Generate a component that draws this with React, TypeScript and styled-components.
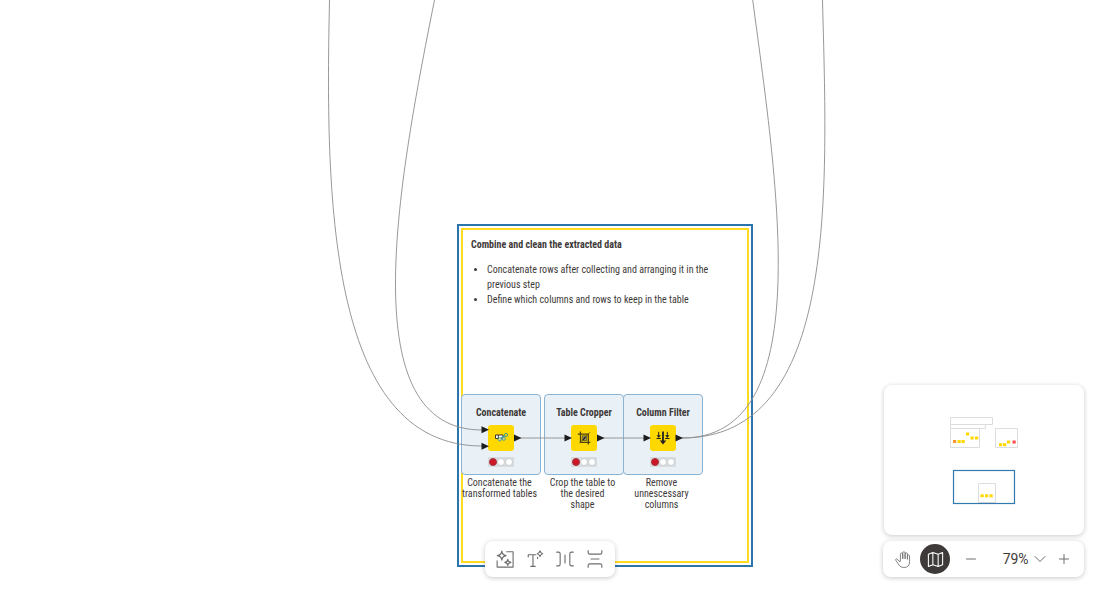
import React from "react";
import styled, { createGlobalStyle } from "styled-components";

const GlobalStyle = createGlobalStyle`
  * { box-sizing: border-box; }
  body {
    margin: 0;
    background: #fff;
    color: #3e3a39;
    font-family: "Roboto Condensed", "Liberation Sans Narrow", Roboto, sans-serif;
  }
`;

const Canvas = styled.main`
  position: relative;
  min-height: 100vh;
  overflow: hidden;
`;

const Annotation = styled.section`
  position: absolute;
  left: 457px;
  top: 224px;
  width: 296px;
  height: 343px;
  padding: 2px;
  border: 2px solid #2a76ac;
`;

const AnnotationBody = styled.div`
  height: 100%;
  padding: 7px 8px;
  border: 2px solid #ffdc20;
  font-size: 10px;
  line-height: 15px;
`;

const AnnotationTitle = styled.h2`
  margin: 0 0 10px;
  font-size: 10px;
  font-weight: 700;
  line-height: 15px;
`;

const AnnotationList = styled.ul`
  margin: 0;
  padding: 0 24px 0 16px;
`;

const NodeItem = styled.article<{ $x: number }>`
  position: absolute;
  left: ${(p) => p.$x}px;
  top: 394px;
  width: 80px;
  display: flex;
  flex-direction: column;
  gap: 2px;
`;

const NodeFrame = styled.div`
  height: 81px;
  padding-top: 12px;
  display: flex;
  flex-direction: column;
  align-items: center;
  gap: 6px;
  border: 1px solid #8ab4d6;
  border-radius: 4px;
  background: #e9f0f6;
`;

const NodeName = styled.h3`
  margin: 0;
  font-size: 10px;
  font-weight: 700;
  line-height: 12px;
  white-space: nowrap;
`;

const NodeTorso = styled.div`
  width: 26px;
  height: 26px;
  border-radius: 3px;
  background: #ffd800;
  svg { display: block; }
`;

const Status = styled.div`
  width: 26px;
  height: 10px;
  display: flex;
  align-items: center;
  justify-content: center;
  border-radius: 1px;
  background: #d8dcdf;
`;

const Light = styled.span<{ $on?: boolean }>`
  width: 8px;
  height: 8px;
  border-radius: 50%;
  border: 1px solid ${(p) => (p.$on ? "#a8323f" : "#cbcfd2")};
  background: ${(p) => (p.$on ? "#cc1726" : "#fff")};
`;

const NodeLabel = styled.p`
  margin: 0;
  padding-right: 3px;
  font-size: 10px;
  line-height: 11px;
  text-align: center;
  white-space: pre-line;
`;

const Connectors = styled.svg`
  position: absolute;
  left: 0;
  top: 0;
  pointer-events: none;
  overflow: visible;
`;

const panel = `
  background: #fff;
  border-radius: 8px;
  box-shadow: 0 1px 5px rgba(0, 0, 0, 0.22);
`;

const Toolbar = styled.div`
  position: absolute;
  bottom: 16px;
  left: 50%;
  transform: translateX(-50%);
  display: flex;
  padding: 3px 5px;
  ${panel}
`;

const Dock = styled.aside`
  position: absolute;
  right: 16px;
  bottom: 16px;
  display: flex;
  flex-direction: column;
  align-items: flex-end;
  gap: 6px;
`;

const Minimap = styled.div`
  width: 200px;
  height: 150px;
  ${panel}
  svg { display: block; }
`;

const ZoomBar = styled.div`
  width: 201px;
  display: flex;
  align-items: center;
  padding: 3px 5px;
  ${panel}
`;

const IconButton = styled.button<{ $active?: boolean; $narrow?: boolean }>`
  width: ${(p) => (p.$narrow ? 20 : 30)}px;
  height: 30px;
  padding: 0;
  display: flex;
  align-items: center;
  justify-content: center;
  border: 0;
  border-radius: 50%;
  color: ${(p) => (p.$active ? "#fff" : "#6e6e6e")};
  background: ${(p) => (p.$active ? "#3e3a39" : "transparent")};
`;

const MoveGroup = styled.div`
  display: flex;
  gap: 2px;
  margin-right: 6px;
`;

const ZoomInput = styled.input`
  width: 44px;
  padding: 0 1px 0 0;
  border: 0;
  outline: 0;
  background: transparent;
  color: #3e3a39;
  font: 14px Roboto, sans-serif;
  text-align: right;
`;

const Icon = ({ children, size = 16 }: { children: React.ReactNode; size?: number }) => (
  <svg width={size} height={size} viewBox="0 0 16 16" fill="none" stroke="currentColor" strokeWidth="1" strokeLinecap="round" strokeLinejoin="round" aria-hidden>
    {children}
  </svg>
);

const ConcatenateIcon = () => (
  <svg width="26" height="26" viewBox="0 0 26 26" fill="none">
    <path d="M7.500 10h7.500v3.500H7.500z" fill="#fff" stroke="#222" strokeWidth=".9" />
    <path d="M10.300 10v3.500" stroke="#222" strokeWidth=".9" />
    <path d="M12.500 13.500l5-3.500" stroke="#489a9c" strokeWidth="1.1" />
    <circle cx="18" cy="10" r="1.600" fill="#ffd800" stroke="#489a9c" />
    <circle cx="11.800" cy="14.300" r="1.600" fill="#e2e690" stroke="#489a9c" />
    <circle cx="15.800" cy="13.800" r="1.500" fill="#e2e690" stroke="#489a9c" />
  </svg>
);

const CropperIcon = () => (
  <svg width="26" height="26" viewBox="0 0 26 26" fill="none" stroke="#4a4210">
    <path d="M9.500 6.500v10.800h9.800M6.800 9.200h10.500V19.500" strokeWidth="1.300" />
    <path d="M11.200 10.800h4.500v4.700h-4.500z" strokeWidth=".6" fill="#8b8a6a" />
    <path d="M8.500 18.300L19 7.200" strokeWidth=".7" />
    <path d="M12 14.800l2.500-3" strokeWidth="1.200" stroke="#222" />
  </svg>
);

const FilterIcon = () => (
  <svg width="26" height="26" viewBox="0 0 26 26" fill="#222" stroke="#222">
    <path d="M13 6.500v9.500" strokeWidth="1.800" />
    <path d="M9.700 15.500h6.600l-3.300 4z" stroke="none" />
    <path d="M8.700 6.800v5M17.300 6.800v5M6.500 13.500h4.400M15.100 13.500h4.400" />
    <path d="M6.600 10.300h4.200l-2.100 2.700zM15.200 10.300h4.200l-2.100 2.700z" stroke="none" />
  </svg>
);

const nodes = [
  { x: 461, name: "Concatenate", label: "Concatenate the\ntransformed tables", icon: <ConcatenateIcon /> },
  { x: 544, name: "Table Cropper", label: "Crop the table to\nthe desired\nshape", icon: <CropperIcon /> },
  { x: 623, name: "Column Filter", label: "Remove\nunnescessary\ncolumns", icon: <FilterIcon /> },
];

const inPorts = [[481.5, 429.8], [481.5, 446.2], [564.5, 438], [643.5, 438]];
const outPorts = [[514, 438], [597, 438], [675.5, 438]];

const miniNodes: [number, number, string][] = [
  [70.5, 55, "#ff9632"], [75, 55, "#ffd800"], [79, 55, "#ffd800"], [83.5, 47.5, "#ffd800"],
  [88, 51.5, "#ffd800"], [92.5, 51.5, "#ffd800"], [116.5, 58.2, "#ffd800"],
  [120.5, 58.2, "#ffd800"], [124.5, 55.5, "#ffd800"], [130, 55.5, "#ff4b4b"],
  [98, 109.3, "#ffd800"], [102.5, 109.3, "#ffd800"], [107, 109.3, "#ffd800"],
];

export default function App() {
  return (
    <>
      <GlobalStyle />
      <Canvas>
        <Annotation>
          <AnnotationBody>
            <AnnotationTitle>Combine and clean the extracted data</AnnotationTitle>
            <AnnotationList>
              <li>Concatenate rows after collecting and arranging it in the previous step</li>
              <li>Define which columns and rows to keep in the table</li>
            </AnnotationList>
          </AnnotationBody>
        </Annotation>

        {nodes.map((n) => (
          <NodeItem key={n.name} $x={n.x}>
            <NodeFrame>
              <NodeName>{n.name}</NodeName>
              <NodeTorso>{n.icon}</NodeTorso>
              <Status>
                <Light $on />
                <Light />
                <Light />
              </Status>
            </NodeFrame>
            <NodeLabel>{n.label}</NodeLabel>
          </NodeItem>
        ))}

        <Connectors width="1" height="1" aria-hidden>
          <g fill="none" stroke="#8c8c8c" strokeWidth=".9">
            <path d="M329.500 0C325.500 190 326 446 482 446" />
            <path d="M434.500 0C396.500 190 352.700 430 482 430" />
            <path d="M682 438C817.500 438 778 190 752.700 0" />
            <path d="M682 438C839.500 438 827.300 190 822.500 0" />
            <path d="M520 438H566M603 438H645" />
          </g>
          <g fill="#1c1c1c">
            {[...inPorts, ...outPorts].map(([x, y]) => (
              <path key={`${x}-${y}`} d={`M${x} ${y - 3.5}l7.500 3.500l-7.500 3.500z`} />
            ))}
          </g>
        </Connectors>

        <Toolbar role="toolbar" aria-label="Canvas tools">
          <IconButton aria-label="Generate annotation">
            <Icon size={18}>
              <path d="M9.500 1.500h5.700v13.700H1V9.500" />
              <path d="M5.200 1Q5.600 4.600 9 5Q5.600 5.400 5.200 9Q4.800 5.400 1.200 5Q4.800 4.600 5.200 1z" />
              <path d="M10.500 8.300Q10.900 10.700 13.200 11Q10.900 11.300 10.500 13.700Q10.100 11.300 7.800 11Q10.100 10.700 10.500 8.300z" />
            </Icon>
          </IconButton>
          <IconButton aria-label="Add text">
            <Icon size={18}>
              <path d="M8.800 4.200H2v2M6.200 4.200v10.300M4.200 14.500h4M10.300 7.500v-1" />
              <path d="M12.400 .8Q12.900 2.800 14.800 3.300Q12.900 3.800 12.400 5.800Q11.900 3.800 10 3.300Q11.900 2.800 12.400 .8z" />
            </Icon>
          </IconButton>
          <IconButton aria-label="Adjust horizontal spacing">
            <Icon size={18}>
              <path d="M.6 1.900h1.600q1.500 0 1.500 1.500v9.200q0 1.500-1.500 1.500H.6M15.400 1.900h-1.600q-1.500 0-1.500 1.500v9.200q0 1.500 1.500 1.500h1.600M8 4.500v7" />
            </Icon>
          </IconButton>
          <IconButton aria-label="Adjust vertical spacing">
            <Icon size={18}>
              <path d="M1.900 .6v1.600q0 1.500 1.500 1.500h9.200q1.500 0 1.500-1.500V.6M1.900 15.400v-1.600q0-1.500 1.500-1.500h9.200q1.500 0 1.500 1.500v1.600M4.500 8h7" />
            </Icon>
          </IconButton>
        </Toolbar>

        <Dock>
          <Minimap aria-label="Minimap">
            <svg width="200" height="150" viewBox="0 0 200 150" fill="none">
              <g stroke="#dcddde">
                <path d="M66.500 32.500h42v7h-42zM66.500 39.500h35v4h-35zM66.500 43.500h29v19h-29zM111.500 43.500h22v19h-22zM94.500 98.500h17v19h-17z" />
              </g>
              {miniNodes.map(([x, y, c]) => (
                <rect key={`${x}-${y}`} x={x - 1.5} y={y} width="3.200" height="3" fill={c} />
              ))}
              <rect x="69.500" y="85.500" width="61" height="33" stroke="#3279b0" strokeWidth="1.200" />
            </svg>
          </Minimap>
          <ZoomBar>
            <MoveGroup>
              <IconButton aria-label="Pan mode">
                <Icon size={17}>
                  <path d="M3.900 9.700L2.300 7.800Q1.500 7 .8 7.700Q.4 8.200 .9 9L4 13.600Q5.500 15.500 8.500 15.500Q13.700 15.500 13.700 10V4.800Q13.600 3.700 12.700 3.700Q11.800 3.700 11.700 4.800V7.500M11.700 7.500V2.800Q11.600 1.700 10.600 1.700Q9.600 1.700 9.500 2.800V7M9.500 7V1.800Q9.400 .7 8.400 .7Q7.400 .7 7.300 1.800V7M7.300 7V2.900Q7.200 1.900 6.200 1.900Q5.200 1.900 5.100 3V9.700Q5.100 10.900 3.900 9.700" strokeWidth=".8" />
                </Icon>
              </IconButton>
              <IconButton $active aria-label="Toggle minimap">
                <Icon size={17}>
                  <path d="M1.300 3.100L5.500 1.500L10.500 3.100L14.700 1.500V12.900L10.500 14.500L5.500 12.900L1.300 14.500zM5.500 1.500V12.900M10.500 3.100V14.500" />
                </Icon>
              </IconButton>
            </MoveGroup>
            <IconButton aria-label="Zoom out">
              <Icon><path d="M3.500 8h9" /></Icon>
            </IconButton>
            <ZoomInput aria-label="Zoom level" defaultValue="79%" />
            <IconButton $narrow aria-label="Zoom options">
              <Icon><path d="M3 5.500l5 5l5-5" /></Icon>
            </IconButton>
            <IconButton aria-label="Zoom in">
              <Icon><path d="M3.500 8h9M8 3.500v9" /></Icon>
            </IconButton>
          </ZoomBar>
        </Dock>
      </Canvas>
    </>
  );
}
